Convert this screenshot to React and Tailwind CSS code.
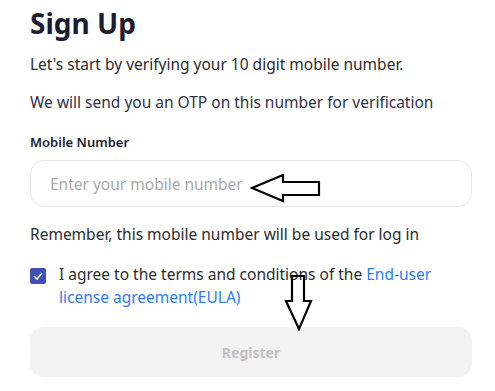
export default function App() {
  return (
    <div className="w-[495px] h-[391px] bg-white overflow-hidden font-['Noto_Sans',sans-serif]">
      <div className="ml-[30px] pt-[5px] w-[442px]">
        <h1 className="text-[28px] leading-[36px] font-bold text-[#1c1c2e]">Sign Up</h1>
        <p className="mt-[13px] text-[15.5px] leading-[20px] text-[#2b2b2b]">
          Let's start by verifying your 10 digit mobile number.
        </p>
        <p className="mt-[18px] text-[15.5px] leading-[20px] text-[#2e3148]">
          We will send you an OTP on this number for verification
        </p>

        <label className="block mt-[21px] text-[13px] leading-[18px] font-semibold text-[#1c1c2e]">
          Mobile Number
        </label>
        <div className="relative mt-[9px]">
          <input
            className="w-full h-[47px] rounded-[14px] border border-[#e6e6e6] px-[19px] text-[15.5px] text-[#333] placeholder-[#a9a9a9] outline-none"
            placeholder="Enter your mobile number"
          />
          {/* annotation arrow pointing at the placeholder */}
          <svg className="absolute left-[220px] top-[14px]" width="72" height="30" viewBox="0 0 72 30">
            <path d="M2 14 L33 1 L33 8 L69 8 L69 21 L33 21 L33 27 Z" fill="none" stroke="#000" strokeWidth="2.2" />
          </svg>
        </div>

        <p className="mt-[17px] text-[15.5px] leading-[20px] text-[#2b2b2b]">
          Remember, this mobile number will be used for log in
        </p>

        <div className="relative flex items-start mt-[19px]">
          <span className="mt-[5px] w-[16px] h-[16px] shrink-0 rounded-[2px] bg-[#3f51b5] flex items-center justify-center">
            <svg width="10" height="8" viewBox="0 0 10 8">
              <path d="M1 4 L4 7 L9 1" fill="none" stroke="#fff" strokeWidth="1.6" />
            </svg>
          </span>
          <p className="ml-[13px] text-[15.5px] leading-[23px] text-[#2b2b2b]">
            I agree to the terms and conditions of the{" "}
            <a className="text-[#2f7cf6]">End-user license agreement(EULA)</a>
          </p>
          <svg className="absolute left-[254px] top-[12px]" width="30" height="56" viewBox="0 0 30 56">
            <path d="M8 1 L20 1 L20 26 L27 26 L15 54 L2 26 L8 26 Z" fill="none" stroke="#000" strokeWidth="2.2" />
          </svg>
        </div>

        <button className="mt-[18px] w-full h-[50px] rounded-[14px] bg-[#f2f2f2] text-[14px] font-bold text-[#c2c2c2]">
          Register
        </button>
      </div>
    </div>
  );
}
